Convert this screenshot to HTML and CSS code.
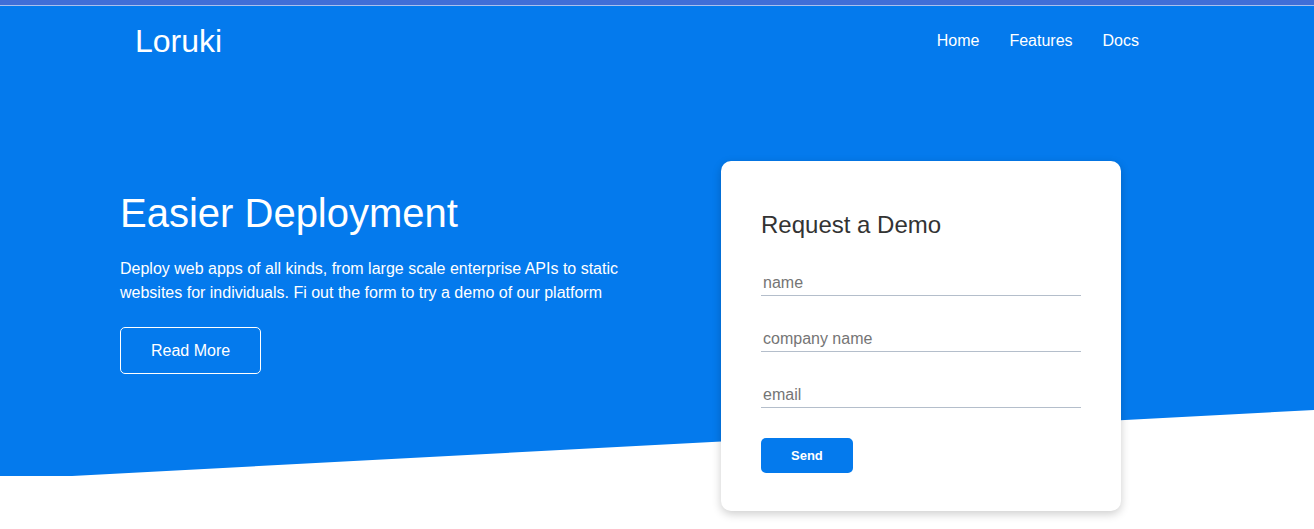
FILE: index.html
```html
<!DOCTYPE html>
<html lang="en">
<head>
<meta charset="UTF-8">
<title>Loruki</title>
<link rel="stylesheet" href="styles.css">
</head>
<body>
<div class="topbar"></div>
<div class="hero">
  <header class="navbar">
    <h1 class="logo">Loruki</h1>
    <nav>
      <ul class="nav-list">
        <li><a href="#">Home</a></li>
        <li><a href="#">Features</a></li>
        <li><a href="#">Docs</a></li>
      </ul>
    </nav>
  </header>
  <section class="showcase">
    <div class="showcase-text">
      <h2 class="title">Easier Deployment</h2>
      <p class="lead">Deploy web apps of all kinds, from large scale enterprise APIs to static websites for individuals. Fi out the form to try a demo of our platform</p>
      <a href="#" class="btn-outline">Read More</a>
    </div>
    <div class="card">
      <h3 class="card-title">Request a Demo</h3>
      <form class="form">
        <input type="text" class="field" placeholder="name">
        <input type="text" class="field" placeholder="company name">
        <input type="email" class="field" placeholder="email">
        <button type="button" class="btn-send">Send</button>
      </form>
    </div>
  </section>
</div>
</body>
</html>
```

FILE: styles.css
```css
* { box-sizing: border-box; }
html, body { min-height: 529px; }
body {
  margin: 0;
  font-family: "Liberation Sans", Arial, sans-serif;
  background: #fff;
}
.topbar {
  height: 6px;
  background: #3f6ed8;
  border-bottom: 1px solid #a9c0ee;
}
.hero {
  position: relative;
  height: 470px;
  color: #fff;
}
.hero::before {
  content: "";
  position: absolute;
  inset: 0;
  background: #047aed;
  clip-path: polygon(0 0, 100% 0, 100% 404px, 72px 470px, 0 470px);
}
.navbar {
  position: relative;
  display: flex;
  align-items: center;
  justify-content: space-between;
  height: 70px;
  padding: 0 175px 0 135px;
}
.logo {
  margin: 0;
  font-size: 32px;
  font-weight: normal;
  line-height: 40px;
}
.nav-list {
  display: flex;
  gap: 30px;
  list-style: none;
  margin: 0;
  padding: 0;
}
.nav-list a {
  color: #fff;
  text-decoration: none;
  font-size: 16px;
}
.showcase {
  position: relative;
  display: grid;
  grid-template-columns: 1fr 400px;
  column-gap: 30px;
  padding: 0 193px 0 120px;
  margin-top: 85px;
}
.showcase-text {
  padding-top: 28px;
}
.title {
  margin: 0;
  font-size: 40px;
  font-weight: normal;
  line-height: 48px;
}
.lead {
  max-width: 545px;
  margin: 20px 0 22px;
  font-size: 16px;
  line-height: 24px;
}
.btn-outline {
  display: inline-block;
  padding: 14px 30px;
  border: 1px solid #fff;
  border-radius: 5px;
  color: #fff;
  text-decoration: none;
  font-size: 16px;
  line-height: 17px;
}
.card {
  height: 350px;
  background: #fff;
  border-radius: 10px;
  box-shadow: 0 3px 10px rgba(0, 0, 0, 0.2);
  padding: 50px 40px 38px;
  color: #333;
}
.card-title {
  margin: 0;
  font-size: 24px;
  font-weight: normal;
  line-height: 28px;
}
.form {
  display: flex;
  flex-direction: column;
  align-items: flex-start;
  gap: 31px;
  margin-top: 32px;
}
.field {
  width: 100%;
  border: 0;
  border-bottom: 1px solid #b4becb;
  padding: 3px 2px;
  font-family: "Liberation Sans", Arial, sans-serif;
  font-size: 16px;
  line-height: 18px;
  color: #333;
  outline: none;
  background: transparent;
}
.field::placeholder { color: #757575; }
.btn-send {
  margin-top: -1px;
  padding: 10px 30px;
  border: 0;
  border-radius: 5px;
  background: #047aed;
  color: #fff;
  font-family: "Liberation Sans", Arial, sans-serif;
  font-size: 13px;
  font-weight: bold;
  line-height: 15px;
}
```
